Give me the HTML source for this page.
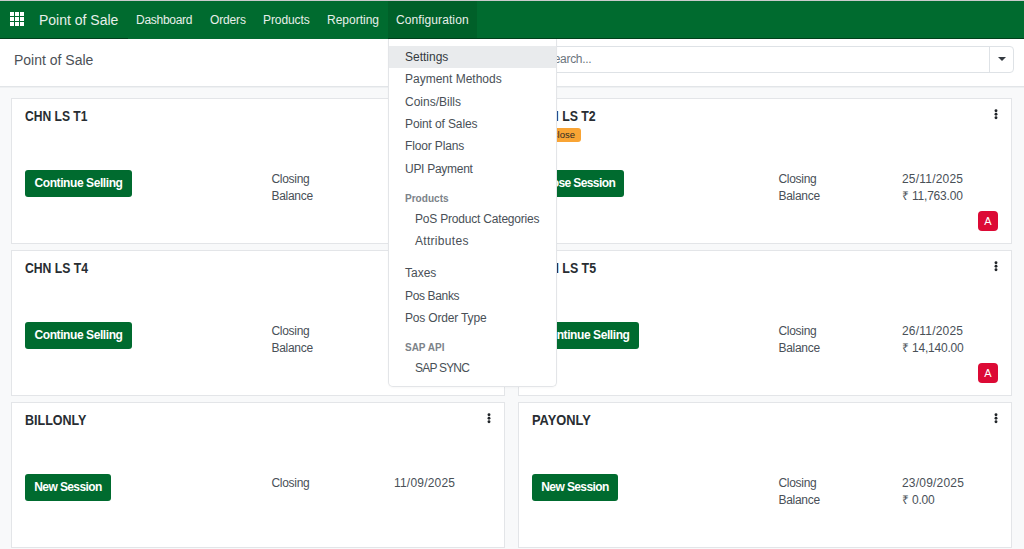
<!DOCTYPE html>
<html><head><meta charset="utf-8">
<style>
*{box-sizing:border-box;margin:0;padding:0}
html,body{width:1024px;height:549px;overflow:hidden;background:#f8f9fa;font-family:"Liberation Sans",sans-serif;position:relative}
.a{position:absolute;white-space:nowrap;line-height:1}
#nav{position:absolute;left:0;top:0;width:1024px;height:39px;background:#006b2f;border-top:1px solid #c9cbcc}
#navb1{position:absolute;left:0;top:38px;width:128px;height:1px;background:#00401b}
#navb2{position:absolute;left:128px;top:38px;width:260px;height:1px;background:#03672f}
#navb3{position:absolute;left:388px;top:38px;width:636px;height:1px;background:#00401b}
#active{position:absolute;left:388px;top:1px;width:89px;height:37px;background:#006029}
.nt{color:#e8efea;font-size:12px}
.grid{position:absolute;left:10px;top:12px;width:14px;height:14px}
.grid i{position:absolute;width:4px;height:4px;background:#fff}
#cp{position:absolute;left:0;top:39px;width:1024px;height:48px;background:#fff;border-bottom:1px solid #e2e5e8}
#search{position:absolute;left:520px;top:46px;width:494px;height:27px;border:1px solid #dee2e6;border-radius:4px;background:#fff}
#stog{position:absolute;left:989px;top:46px;width:1px;height:27px;background:#dee2e6}
.card{position:absolute;width:494px;height:146px;background:#fff;border:1px solid #e3e5e8}
.ttl{font-weight:bold;font-size:14px;color:#282d32;transform-origin:0 0}
.btn{position:absolute;height:27px;background:#006b2f;border-radius:3px;color:#fff;font-weight:bold;font-size:12px;text-align:center;line-height:27px}
.lbl{font-size:12px;color:#495057}
.kb{position:absolute}
.badgeA{position:absolute;width:20px;height:20px;background:#dc0a35;border-radius:4px;color:#fff;font-size:11px;text-align:center;line-height:20px}
#dd{position:absolute;left:388px;top:39px;width:169px;height:348px;background:#fff;border:1px solid #e3e5e8;border-top:none;border-radius:0 0 5px 5px;box-shadow:0 1px 2px rgba(0,0,0,.03)}
.di{color:#495057;font-size:12px}
.dh{color:#7c8389;font-size:11px;font-weight:bold;transform-origin:0 0}
#hov{position:absolute;left:389px;top:46px;width:167px;height:22px;background:#e9ebed}
</style></head><body>
<div id="nav"></div>
<div id="active"></div>
<div id="navb1"></div><div id="navb2"></div><div id="navb3"></div>
<div class="grid"><i style="left:0;top:0"></i><i style="left:5px;top:0"></i><i style="left:10px;top:0"></i><i style="left:0;top:5px"></i><i style="left:5px;top:5px"></i><i style="left:10px;top:5px"></i><i style="left:0;top:10px"></i><i style="left:5px;top:10px"></i><i style="left:10px;top:10px"></i></div>
<div class="a nt" style="left:39px;top:13px;font-size:14px">Point of Sale</div>
<div class="a nt" style="left:136px;top:14px;letter-spacing:-0.28px">Dashboard</div>
<div class="a nt" style="left:210px;top:14px;letter-spacing:-0.15px">Orders</div>
<div class="a nt" style="left:263px;top:14px;letter-spacing:-0.09px">Products</div>
<div class="a nt" style="left:327px;top:14px">Reporting</div>
<div class="a nt" style="left:396px;top:14px;letter-spacing:0.1px">Configuration</div>

<div id="cp"></div><div class="a" style="left:0;top:87px;width:1024px;height:1px;background:#eef0f2"></div>
<div class="a" style="left:14px;top:53px;font-size:14px;color:#4c5157">Point of Sale</div>
<div id="search"></div><div id="stog"></div>
<div class="a" style="left:998px;top:57px;width:0;height:0;border-left:4px solid transparent;border-right:4px solid transparent;border-top:4px solid #343a40"></div>
<div class="a" style="left:546px;top:53px;font-size:12px;color:#6c757d;letter-spacing:-0.3px">Search...</div>

<!-- cards -->
<div class="card" style="left:11px;top:98px"></div>
<div class="card" style="left:518px;top:98px"></div>
<div class="card" style="left:11px;top:250px"></div>
<div class="card" style="left:518px;top:250px"></div>
<div class="card" style="left:11px;top:402px"></div>
<div class="card" style="left:518px;top:402px"></div>

<!-- row1 col1 -->
<div class="a ttl" style="left:25px;top:109px;transform:scaleX(0.863)">CHN LS T1</div>
<div class="btn" style="left:25px;top:170px;width:107px;letter-spacing:-0.42px">Continue Selling</div>
<div class="a lbl" style="left:271.5px;top:173px;letter-spacing:-0.3px">Closing</div>
<div class="a lbl" style="left:271.5px;top:190px;letter-spacing:-0.3px">Balance</div>
<svg class="kb" style="left:486.7px;top:109px" width="4" height="12" viewBox="0 0 4 12"><circle cx="2" cy="1.8" r="1.45" fill="#212529"/><circle cx="2" cy="5.3" r="1.45" fill="#212529"/><circle cx="2" cy="8.8" r="1.45" fill="#212529"/></svg>

<!-- row1 col2 -->
<div class="a ttl" style="left:532px;top:109px;transform:scaleX(0.881)">CHN LS T2</div>
<div class="a" style="left:532px;top:128px;width:49px;height:14px;background:#f9a434;border-radius:3px;font-size:9.5px;color:#2e2a25;line-height:14px;text-align:center">To Close</div>
<div class="btn" style="left:532px;top:170px;width:92px;letter-spacing:-0.6px">Close Session</div>
<div class="a lbl" style="left:778.5px;top:173px;letter-spacing:-0.3px">Closing</div>
<div class="a lbl" style="left:778.5px;top:190px;letter-spacing:-0.3px">Balance</div>
<div class="a lbl" style="left:902px;top:173px;letter-spacing:0.2px">25/11/2025</div>
<div class="a lbl" style="left:902px;top:190px;letter-spacing:-0.2px">₹ 11,763.00</div>
<svg class="kb" style="left:994.2px;top:109px" width="4" height="12" viewBox="0 0 4 12"><circle cx="2" cy="1.8" r="1.45" fill="#212529"/><circle cx="2" cy="5.3" r="1.45" fill="#212529"/><circle cx="2" cy="8.8" r="1.45" fill="#212529"/></svg>
<div class="badgeA" style="left:978px;top:211px">A</div>

<!-- row2 col1 -->
<div class="a ttl" style="left:25px;top:261px;transform:scaleX(0.871)">CHN LS T4</div>
<div class="btn" style="left:25px;top:322px;width:107px;letter-spacing:-0.42px">Continue Selling</div>
<div class="a lbl" style="left:271.5px;top:325px;letter-spacing:-0.3px">Closing</div>
<div class="a lbl" style="left:271.5px;top:342px;letter-spacing:-0.3px">Balance</div>

<!-- row2 col2 -->
<div class="a ttl" style="left:532px;top:261px;transform:scaleX(0.886)">CHN LS T5</div>
<div class="btn" style="left:532px;top:322px;width:107px;letter-spacing:-0.42px">Continue Selling</div>
<div class="a lbl" style="left:778.5px;top:325px;letter-spacing:-0.3px">Closing</div>
<div class="a lbl" style="left:778.5px;top:342px;letter-spacing:-0.3px">Balance</div>
<div class="a lbl" style="left:902px;top:325px;letter-spacing:0.2px">26/11/2025</div>
<div class="a lbl" style="left:902px;top:342px;letter-spacing:-0.2px">₹ 14,140.00</div>
<svg class="kb" style="left:994.2px;top:261px" width="4" height="12" viewBox="0 0 4 12"><circle cx="2" cy="1.8" r="1.45" fill="#212529"/><circle cx="2" cy="5.3" r="1.45" fill="#212529"/><circle cx="2" cy="8.8" r="1.45" fill="#212529"/></svg>
<div class="badgeA" style="left:978px;top:363px">A</div>

<!-- row3 col1 -->
<div class="a ttl" style="left:25px;top:413px;transform:scaleX(0.894)">BILLONLY</div>
<div class="btn" style="left:25px;top:474px;width:86px;letter-spacing:-0.6px">New Session</div>
<div class="a lbl" style="left:271.5px;top:477px;letter-spacing:-0.3px">Closing</div>
<div class="a lbl" style="left:394px;top:477px;letter-spacing:0.2px">11/09/2025</div>
<svg class="kb" style="left:486.7px;top:413px" width="4" height="12" viewBox="0 0 4 12"><circle cx="2" cy="1.8" r="1.45" fill="#212529"/><circle cx="2" cy="5.3" r="1.45" fill="#212529"/><circle cx="2" cy="8.8" r="1.45" fill="#212529"/></svg>

<!-- row3 col2 -->
<div class="a ttl" style="left:532px;top:413px;transform:scaleX(0.918)">PAYONLY</div>
<div class="btn" style="left:532px;top:474px;width:86px;letter-spacing:-0.6px">New Session</div>
<div class="a lbl" style="left:778.5px;top:477px;letter-spacing:-0.3px">Closing</div>
<div class="a lbl" style="left:778.5px;top:494px;letter-spacing:-0.3px">Balance</div>
<div class="a lbl" style="left:902px;top:477px;letter-spacing:0.2px">23/09/2025</div>
<div class="a lbl" style="left:902px;top:494px;letter-spacing:-0.2px">₹ 0.00</div>
<svg class="kb" style="left:994.2px;top:413px" width="4" height="12" viewBox="0 0 4 12"><circle cx="2" cy="1.8" r="1.45" fill="#212529"/><circle cx="2" cy="5.3" r="1.45" fill="#212529"/><circle cx="2" cy="8.8" r="1.45" fill="#212529"/></svg>

<!-- dropdown -->
<div id="dd"></div>
<div id="hov"></div>
<div class="a di" style="left:405px;top:51px;color:#343a40">Settings</div>
<div class="a di" style="left:405px;top:73px">Payment Methods</div>
<div class="a di" style="left:405px;top:96px">Coins/Bills</div>
<div class="a di" style="left:405px;top:118px;letter-spacing:-0.12px">Point of Sales</div>
<div class="a di" style="left:405px;top:140px;letter-spacing:-0.15px">Floor Plans</div>
<div class="a di" style="left:405px;top:163px;letter-spacing:-0.28px">UPI Payment</div>
<div class="a dh" style="left:405px;top:193px;transform:scaleX(0.914)">Products</div>
<div class="a di" style="left:415px;top:213px;letter-spacing:-0.2px">PoS Product Categories</div>
<div class="a di" style="left:415px;top:235px;letter-spacing:0.3px">Attributes</div>
<div class="a di" style="left:405px;top:267px">Taxes</div>
<div class="a di" style="left:405px;top:290px;letter-spacing:-0.35px">Pos Banks</div>
<div class="a di" style="left:405px;top:312px;letter-spacing:-0.17px">Pos Order Type</div>
<div class="a dh" style="left:405px;top:342px;transform:scaleX(0.908)">SAP API</div>
<div class="a di" style="left:415px;top:362px;letter-spacing:-0.8px">SAP SYNC</div>
</body></html>
